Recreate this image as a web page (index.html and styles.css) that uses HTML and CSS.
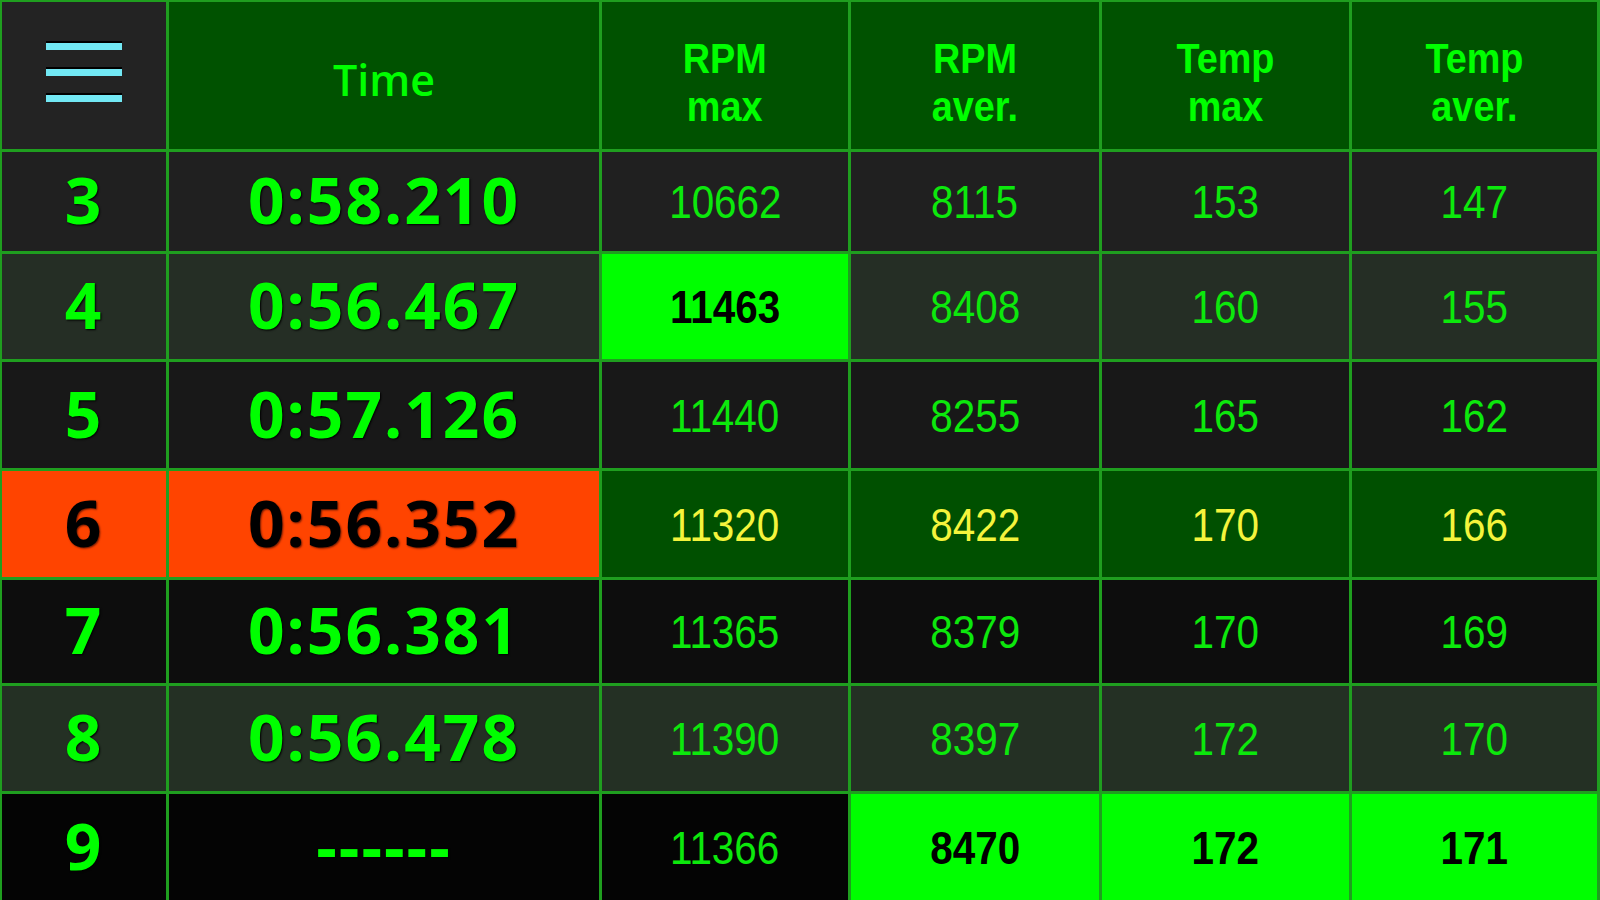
FILE: index.html
```html
<!DOCTYPE html>
<html lang="en">
<head>
<meta charset="utf-8">
<title>Lap times</title>
<link rel="stylesheet" href="styles.css">
</head>
<body>
<div class="board">
  <div class="cell menu">
    <div class="burger"><span></span><span></span><span></span></div>
  </div>
  <div class="cell head"><span class="time-h">Time</span></div>
  <div class="cell head"><span class="nar">RPM<br>max</span></div>
  <div class="cell head"><span class="nar">RPM<br>aver.</span></div>
  <div class="cell head"><span class="nar">Temp<br>max</span></div>
  <div class="cell head"><span class="nar">Temp<br>aver.</span></div>

  <div class="cell r3 lap">3</div>
  <div class="cell r3 lap">0:58.210</div>
  <div class="cell r3 val"><span class="nar">10662</span></div>
  <div class="cell r3 val"><span class="nar">8115</span></div>
  <div class="cell r3 val"><span class="nar">153</span></div>
  <div class="cell r3 val"><span class="nar">147</span></div>

  <div class="cell r4 lap">4</div>
  <div class="cell r4 lap">0:56.467</div>
  <div class="cell best val"><span class="nar">11463</span></div>
  <div class="cell r4 val"><span class="nar">8408</span></div>
  <div class="cell r4 val"><span class="nar">160</span></div>
  <div class="cell r4 val"><span class="nar">155</span></div>

  <div class="cell r5 lap">5</div>
  <div class="cell r5 lap">0:57.126</div>
  <div class="cell r5 val"><span class="nar">11440</span></div>
  <div class="cell r5 val"><span class="nar">8255</span></div>
  <div class="cell r5 val"><span class="nar">165</span></div>
  <div class="cell r5 val"><span class="nar">162</span></div>

  <div class="cell fast lap">6</div>
  <div class="cell fast lap">0:56.352</div>
  <div class="cell r6 val"><span class="nar">11320</span></div>
  <div class="cell r6 val"><span class="nar">8422</span></div>
  <div class="cell r6 val"><span class="nar">170</span></div>
  <div class="cell r6 val"><span class="nar">166</span></div>

  <div class="cell r7 lap">7</div>
  <div class="cell r7 lap">0:56.381</div>
  <div class="cell r7 val"><span class="nar">11365</span></div>
  <div class="cell r7 val"><span class="nar">8379</span></div>
  <div class="cell r7 val"><span class="nar">170</span></div>
  <div class="cell r7 val"><span class="nar">169</span></div>

  <div class="cell r8 lap">8</div>
  <div class="cell r8 lap">0:56.478</div>
  <div class="cell r8 val"><span class="nar">11390</span></div>
  <div class="cell r8 val"><span class="nar">8397</span></div>
  <div class="cell r8 val"><span class="nar">172</span></div>
  <div class="cell r8 val"><span class="nar">170</span></div>

  <div class="cell r9 lap">9</div>
  <div class="cell r9 lap">------</div>
  <div class="cell r9 val"><span class="nar">11366</span></div>
  <div class="cell best val"><span class="nar">8470</span></div>
  <div class="cell best val"><span class="nar">172</span></div>
  <div class="cell best val"><span class="nar">171</span></div>
</div>
</body>
</html>
```

FILE: styles.css
```css
html, body {
  margin: 0;
  padding: 0;
  background: #000;
}

.board {
  box-sizing: border-box;
  width: 1600px;
  height: 900px;
  display: grid;
  grid-template-columns: 164px 430px 246px 248px 247px 1fr;
  grid-template-rows: 147px 99px 105px 106px 106px 103px 105px 1fr;
  gap: 3px;
  padding: 2px 3px 0 2px;
  background: #1f9e1f;
  overflow: hidden;
}

.cell {
  display: flex;
  align-items: center;
  justify-content: center;
  overflow: hidden;
}

.menu { background: #232323; }

.burger {
  display: flex;
  flex-direction: column;
  gap: 19px;
  margin-top: -6px;
}

.burger span {
  display: block;
  width: 76px;
  height: 7px;
  background: #72e8f4;
  box-shadow: 0 -2px 0 #000;
}

.head {
  background: #005200;
  color: #00ff00;
}

.time-h {
  font-family: "Open Sans", "Noto Sans", sans-serif;
  font-weight: 600;
  font-size: 43px;
  margin-top: 8px;
}

.nar {
  display: inline-block;
  font-family: "Liberation Sans", Arial, sans-serif;
  transform: scaleX(0.86);
  text-align: center;
}

.head .nar {
  font-weight: 700;
  font-size: 42px;
  line-height: 48px;
  margin-top: 14px;
  transform: scaleX(0.9);
}

.lap {
  font-family: "Open Sans", "Noto Sans", sans-serif;
  font-weight: 700;
  font-size: 64px;
  color: #00ff00;
  text-shadow: 1px 1px 2px #000;
  letter-spacing: 2px;
  padding-bottom: 4px;
}

.val {
  color: #0ce80c;
  font-size: 47px;
}

.r3 { background: #202020; }
.r4 { background: #252e25; }
.r5 { background: #181818; }
.r6 { background: #005000; color: #f4f43c; }
.r7 { background: #0d0d0d; }
.r8 { background: #243024; }
.r9 { background: #040404; }

.fast {
  background: #ff4400;
  color: #000;
  text-shadow: 1px 1px 2px #6a1800;
}

.best {
  background: #00ff00;
  color: #000;
}

.best .nar { font-weight: 700; }
```
